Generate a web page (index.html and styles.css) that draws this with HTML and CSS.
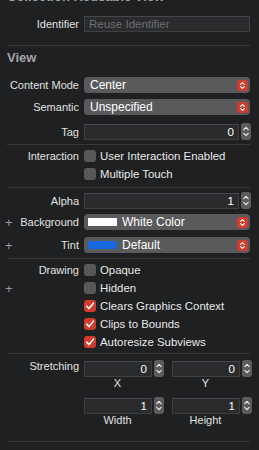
FILE: index.html
```html
<!DOCTYPE html>
<html>
<head>
<meta charset="utf-8">
<link rel="stylesheet" href="styles.css">
</head>
<body>
<div class="panel">
  <div class="cut-title">Collection Reusable View</div>

  <div class="row r-ident">
    <div class="label">Identifier</div>
    <div class="field placeholder">Reuse Identifier</div>
  </div>
  <div class="sep s1"></div>

  <div class="section-title">View</div>

  <div class="row r-cm">
    <div class="label">Content Mode</div>
    <div class="popup"><span class="ptext">Center</span><span class="parrow"><svg width="11" height="11" viewBox="0 0 11 11"><path d="M3.6 4.4 L5.5 2.6 L7.4 4.4 M3.6 6.6 L5.5 8.4 L7.4 6.6" fill="none" stroke="#fff" stroke-width="1.2" stroke-linecap="round" stroke-linejoin="round"/></svg></span></div>
  </div>
  <div class="row r-sem">
    <div class="label">Semantic</div>
    <div class="popup"><span class="ptext">Unspecified</span><span class="parrow"><svg width="11" height="11" viewBox="0 0 11 11"><path d="M3.6 4.4 L5.5 2.6 L7.4 4.4 M3.6 6.6 L5.5 8.4 L7.4 6.6" fill="none" stroke="#fff" stroke-width="1.2" stroke-linecap="round" stroke-linejoin="round"/></svg></span></div>
  </div>
  <div class="row r-tag">
    <div class="label">Tag</div>
    <div class="numctl">
      <div class="field num">0</div>
      <div class="stepper"><svg width="10" height="17" viewBox="0 0 10 17"><path d="M2.8 6.6 L5 4.4 L7.2 6.6 M2.8 10.4 L5 12.6 L7.2 10.4" fill="none" stroke="#e8e8e8" stroke-width="1.2" stroke-linecap="round" stroke-linejoin="round"/></svg></div>
    </div>
  </div>
  <div class="sep s2"></div>

  <div class="row crow r-int1">
    <div class="label">Interaction</div>
    <div class="check"><span class="box"></span><span class="ctext">User Interaction Enabled</span></div>
  </div>
  <div class="row crow">
    <div class="label"></div>
    <div class="check"><span class="box"></span><span class="ctext">Multiple Touch</span></div>
  </div>
  <div class="sep s3"></div>

  <div class="row r-alpha">
    <div class="label">Alpha</div>
    <div class="numctl">
      <div class="field num">1</div>
      <div class="stepper"><svg width="10" height="17" viewBox="0 0 10 17"><path d="M2.8 6.6 L5 4.4 L7.2 6.6 M2.8 10.4 L5 12.6 L7.2 10.4" fill="none" stroke="#e8e8e8" stroke-width="1.2" stroke-linecap="round" stroke-linejoin="round"/></svg></div>
    </div>
  </div>
  <div class="row r-bg">
    <div class="label plus-label"><span class="plus">+</span><span>Background</span></div>
    <div class="popup"><span class="swatch white"></span><span class="ptext sw">White Color</span><span class="parrow"><svg width="11" height="11" viewBox="0 0 11 11"><path d="M3.6 4.4 L5.5 2.6 L7.4 4.4 M3.6 6.6 L5.5 8.4 L7.4 6.6" fill="none" stroke="#fff" stroke-width="1.2" stroke-linecap="round" stroke-linejoin="round"/></svg></span></div>
  </div>
  <div class="row r-tint">
    <div class="label plus-label"><span class="plus">+</span><span>Tint</span></div>
    <div class="popup"><span class="swatch blue"></span><span class="ptext sw">Default</span><span class="parrow"><svg width="11" height="11" viewBox="0 0 11 11"><path d="M3.6 4.4 L5.5 2.6 L7.4 4.4 M3.6 6.6 L5.5 8.4 L7.4 6.6" fill="none" stroke="#fff" stroke-width="1.2" stroke-linecap="round" stroke-linejoin="round"/></svg></span></div>
  </div>
  <div class="sep s4"></div>

  <div class="row crow r-draw1">
    <div class="label">Drawing</div>
    <div class="check"><span class="box"></span><span class="ctext">Opaque</span></div>
  </div>
  <div class="row crow">
    <div class="label plus-label"><span class="plus">+</span><span></span></div>
    <div class="check"><span class="box"></span><span class="ctext">Hidden</span></div>
  </div>
  <div class="row crow">
    <div class="label"></div>
    <div class="check"><span class="box on"><svg width="12" height="12" viewBox="0 0 12 12"><path d="M2.8 6.2 L5 8.6 L9.4 3.2" fill="none" stroke="#fff" stroke-width="1.6" stroke-linecap="round" stroke-linejoin="round"/></svg></span><span class="ctext">Clears Graphics Context</span></div>
  </div>
  <div class="row crow">
    <div class="label"></div>
    <div class="check"><span class="box on"><svg width="12" height="12" viewBox="0 0 12 12"><path d="M2.8 6.2 L5 8.6 L9.4 3.2" fill="none" stroke="#fff" stroke-width="1.6" stroke-linecap="round" stroke-linejoin="round"/></svg></span><span class="ctext">Clips to Bounds</span></div>
  </div>
  <div class="row crow">
    <div class="label"></div>
    <div class="check"><span class="box on"><svg width="12" height="12" viewBox="0 0 12 12"><path d="M2.8 6.2 L5 8.6 L9.4 3.2" fill="none" stroke="#fff" stroke-width="1.6" stroke-linecap="round" stroke-linejoin="round"/></svg></span><span class="ctext">Autoresize Subviews</span></div>
  </div>
  <div class="sep s5"></div>

  <div class="row r-str1">
    <div class="label">Stretching</div>
    <div class="pair">
      <div class="cell">
        <div class="numctl small">
          <div class="field num">0</div>
          <div class="stepper"><svg width="10" height="17" viewBox="0 0 10 17"><path d="M2.8 6.6 L5 4.4 L7.2 6.6 M2.8 10.4 L5 12.6 L7.2 10.4" fill="none" stroke="#e8e8e8" stroke-width="1.2" stroke-linecap="round" stroke-linejoin="round"/></svg></div>
        </div>
        <div class="sub">X</div>
      </div>
      <div class="cell">
        <div class="numctl small">
          <div class="field num">0</div>
          <div class="stepper"><svg width="10" height="17" viewBox="0 0 10 17"><path d="M2.8 6.6 L5 4.4 L7.2 6.6 M2.8 10.4 L5 12.6 L7.2 10.4" fill="none" stroke="#e8e8e8" stroke-width="1.2" stroke-linecap="round" stroke-linejoin="round"/></svg></div>
        </div>
        <div class="sub">Y</div>
      </div>
    </div>
  </div>
  <div class="row r-str2">
    <div class="label"></div>
    <div class="pair">
      <div class="cell">
        <div class="numctl small">
          <div class="field num">1</div>
          <div class="stepper"><svg width="10" height="17" viewBox="0 0 10 17"><path d="M2.8 6.6 L5 4.4 L7.2 6.6 M2.8 10.4 L5 12.6 L7.2 10.4" fill="none" stroke="#e8e8e8" stroke-width="1.2" stroke-linecap="round" stroke-linejoin="round"/></svg></div>
        </div>
        <div class="sub">Width</div>
      </div>
      <div class="cell">
        <div class="numctl small">
          <div class="field num">1</div>
          <div class="stepper"><svg width="10" height="17" viewBox="0 0 10 17"><path d="M2.8 6.6 L5 4.4 L7.2 6.6 M2.8 10.4 L5 12.6 L7.2 10.4" fill="none" stroke="#e8e8e8" stroke-width="1.2" stroke-linecap="round" stroke-linejoin="round"/></svg></div>
        </div>
        <div class="sub">Height</div>
      </div>
    </div>
  </div>
  <div class="sep s6"></div>
</div>
</body>
</html>
```

FILE: styles.css
```css
html, body {
  margin: 0;
  padding: 0;
  background: #1f2022;
  width: 259px;
  height: 450px;
  overflow: hidden;
}
.panel {
  display: flex;
  flex-direction: column;
  font-family: "Liberation Sans", Arial, sans-serif;
  color: #dedede;
  font-size: 11px;
  padding-right: 9px;
}
.cut-title {
  margin-top: -10px;
  margin-left: 7px;
  height: 14px;
  line-height: 14px;
  font-size: 13px;
  font-weight: bold;
  color: #a0a0a2;
}
.row {
  display: grid;
  grid-template-columns: 79px 166px;
  column-gap: 5px;
  align-items: center;
  height: 16px;
}
.label {
  text-align: right;
  white-space: nowrap;
  font-size: 11px;
  color: #e0e0e0;
}
.plus-label {
  display: flex;
  justify-content: space-between;
  align-items: center;
}
.plus {
  margin-left: 5px;
  color: #9a9a9c;
  font-size: 13px;
  font-weight: 300;
}
.sep {
  height: 1px;
  background: #38393b;
  margin-left: 7px;
  width: 243px;
}
.r-ident { margin-top: 12px; }
.s1 { margin-top: 13px; }
.section-title {
  margin-top: 5px;
  margin-left: 7px;
  height: 14px;
  line-height: 14px;
  font-size: 13px;
  font-weight: bold;
  color: #a4a4a6;
}
.r-cm { margin-top: 12px; }
.r-sem { margin-top: 6px; }
.r-tag { margin-top: 8px; }
.s2 { margin-top: 5px; }
.crow { height: 18px; }
.r-int1 { margin-top: 2px; }
.s3 { margin-top: 4px; }
.r-alpha { margin-top: 4px; }
.r-bg { margin-top: 6px; }
.r-tint { margin-top: 7px; }
.s4 { margin-top: 5px; }
.r-draw1 { margin-top: 2px; }
.s5 { margin-top: 2px; }
.r-str1 { margin-top: 6px; height: auto; align-items: start; }
.r-str2 { margin-top: 8px; height: auto; align-items: start; }
.s6 { margin-top: 15px; }

.field {
  box-sizing: border-box;
  height: 16px;
  background: #2a2b2d;
  border: 1px solid #3e3f41;
  border-top-color: #46474a;
  line-height: 14px;
  padding: 0 4px;
  font-size: 11.5px;
  color: #ffffff;
  white-space: nowrap;
  overflow: hidden;
}
.placeholder { color: #6e6f72; }
.num { text-align: right; flex: 1; }
.numctl {
  display: flex;
  align-items: center;
  gap: 2px;
}
.numctl .stepper { margin-right: -1px; }
.stepper {
  width: 10px;
  height: 17px;
  background: #5c5c5f;
  border-radius: 3px;
  display: flex;
}
.popup {
  box-sizing: border-box;
  height: 16px;
  background: #5a5a5d;
  border-radius: 4px;
  display: flex;
  align-items: center;
  padding: 0 2px 0 6px;
}
.ptext {
  flex: 1;
  font-size: 12px;
  color: #ffffff;
  white-space: nowrap;
}
.ptext.sw { margin-left: 5px; }
.parrow {
  width: 11px;
  height: 11px;
  background: #d43a2d;
  border-radius: 3px;
  display: flex;
}
.swatch {
  width: 29px;
  height: 8px;
  margin-left: -2px;
}
.swatch.white { background: #ffffff; }
.swatch.blue { background: #1868de; }
.check {
  display: flex;
  align-items: center;
  gap: 4px;
}
.box {
  width: 12px;
  height: 12px;
  border-radius: 3px;
  background: #58585b;
  display: flex;
}
.box.on { background: #d23a2e; }
.ctext {
  font-size: 11.4px;
  color: #e8e8e8;
  white-space: nowrap;
}
.pair {
  display: grid;
  grid-template-columns: 79px 79px;
  column-gap: 9px;
}
.cell {
  display: flex;
  flex-direction: column;
}
.sub {
  width: 67px;
  height: 12px;
  line-height: 12px;
  text-align: center;
  font-size: 11px;
  color: #e0e0e0;
}
```
